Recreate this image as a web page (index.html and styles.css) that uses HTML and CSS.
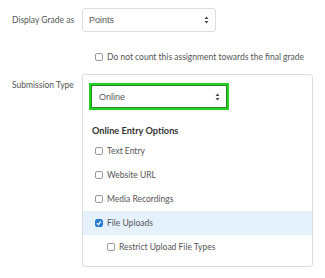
FILE: index.html
```html
<!DOCTYPE html>
<html lang="en">
<head>
    <meta charset="UTF-8">
    <title>Submission Settings</title>
    <link rel="stylesheet" href="styles.css">
</head>
<body>
    <div class="form">
        <div class="form-row">
            <div class="form-label">Display Grade as</div>
            <div class="form-control">
                <div class="select select-grade">
                    <span class="select-value">Points</span>
                    <svg class="select-arrows" width="5" height="8" viewBox="0 0 5 8"><path d="M2.5 0.5L4.5 3H0.5z M2.5 7.5L4.5 5H0.5z" fill="#444"/></svg>
                </div>
            </div>
        </div>

        <div class="form-row row-omit">
            <div class="form-label"></div>
            <div class="form-control">
                <label class="check-row indent">
                    <span class="box"></span>
                    <span>Do not count this assignment towards the final grade</span>
                </label>
            </div>
        </div>

        <div class="form-row">
            <div class="form-label label-top">Submission Type</div>
            <div class="form-control">
                <div class="panel">
                    <div class="select select-type">
                        <span class="select-value">Online</span>
                        <svg class="select-arrows" width="5" height="8" viewBox="0 0 5 8"><path d="M2.5 0.5L4.5 3H0.5z M2.5 7.5L4.5 5H0.5z" fill="#444"/></svg>
                    </div>
                    <div class="panel-title">Online Entry Options</div>
                    <div class="options">
                        <label class="check-row"><span class="box"></span><span>Text Entry</span></label>
                        <label class="check-row"><span class="box"></span><span>Website URL</span></label>
                        <label class="check-row"><span class="box"></span><span>Media Recordings</span></label>
                        <label class="check-row active">
                            <span class="box checked"><svg width="6" height="6" viewBox="0 0 6 6"><path d="M1 3.2L2.4 4.6L5 1.4" fill="none" stroke="#fff" stroke-width="1.2"/></svg></span>
                            <span>File Uploads</span>
                        </label>
                        <label class="check-row sub"><span class="box"></span><span>Restrict Upload File Types</span></label>
                    </div>
                </div>
            </div>
        </div>
    </div>
</body>
</html>
```

FILE: styles.css
```css
body {
    margin: 0;
    font-family: Lato, "Liberation Sans", sans-serif;
    font-size: 8.5px;
    color: #555;
    background: #fff;
}
.form {
    padding-top: 8px;
}
.form-row {
    display: flex;
}
.form-label {
    width: 70px;
    padding-left: 12px;
    color: #555;
    line-height: 24px;
    flex-shrink: 0;
}
.label-top {
    line-height: 12px;
    padding-top: 5px;
}
.form-control {
    flex: 1;
}
.row-omit {
    margin-top: 21px;
    margin-bottom: 13px;
}
.select {
    display: flex;
    align-items: center;
    justify-content: space-between;
    box-sizing: border-box;
    background: #fff;
    font-family: "Liberation Sans", Arial, sans-serif;
    font-size: 9px;
    color: #555;
}
.select-grade {
    width: 134px;
    height: 24px;
    border: 1px solid #ddd;
    border-radius: 3px;
    padding: 0 6px 0 6px;
}
.select-type {
    width: 140px;
    height: 27px;
    border: 2px solid #22d322;
    box-shadow: inset 0 0 0 1px #2a8a2a;
    padding: 0 7px 0 8px;
}
.check-row {
    display: flex;
    align-items: center;
    gap: 4px;
    height: 24px;
    padding-left: 12px;
}
.check-row.indent {
    height: 8px;
    padding-left: 13px;
}
.box {
    width: 6px;
    height: 6px;
    border: 1px solid #999;
    border-radius: 2px;
    background: #fff;
    display: flex;
    align-items: center;
    justify-content: center;
    flex-shrink: 0;
}
.box.checked {
    background: #2b7cd3;
    border-color: #2b7cd3;
}
.panel {
    width: 231px;
    height: 193px;
    box-sizing: border-box;
    border: 1px solid #ddd;
    border-radius: 3px;
    padding-top: 8px;
}
.panel .select {
    margin-left: 6px;
}
.panel-title {
    font-weight: bold;
    font-size: 9.2px;
    color: #333;
    line-height: 12px;
    margin: 15px 0 2px 9px;
}
.active {
    background: #e5f2fd;
}
.check-row.sub {
    padding-left: 24px;
}
```
